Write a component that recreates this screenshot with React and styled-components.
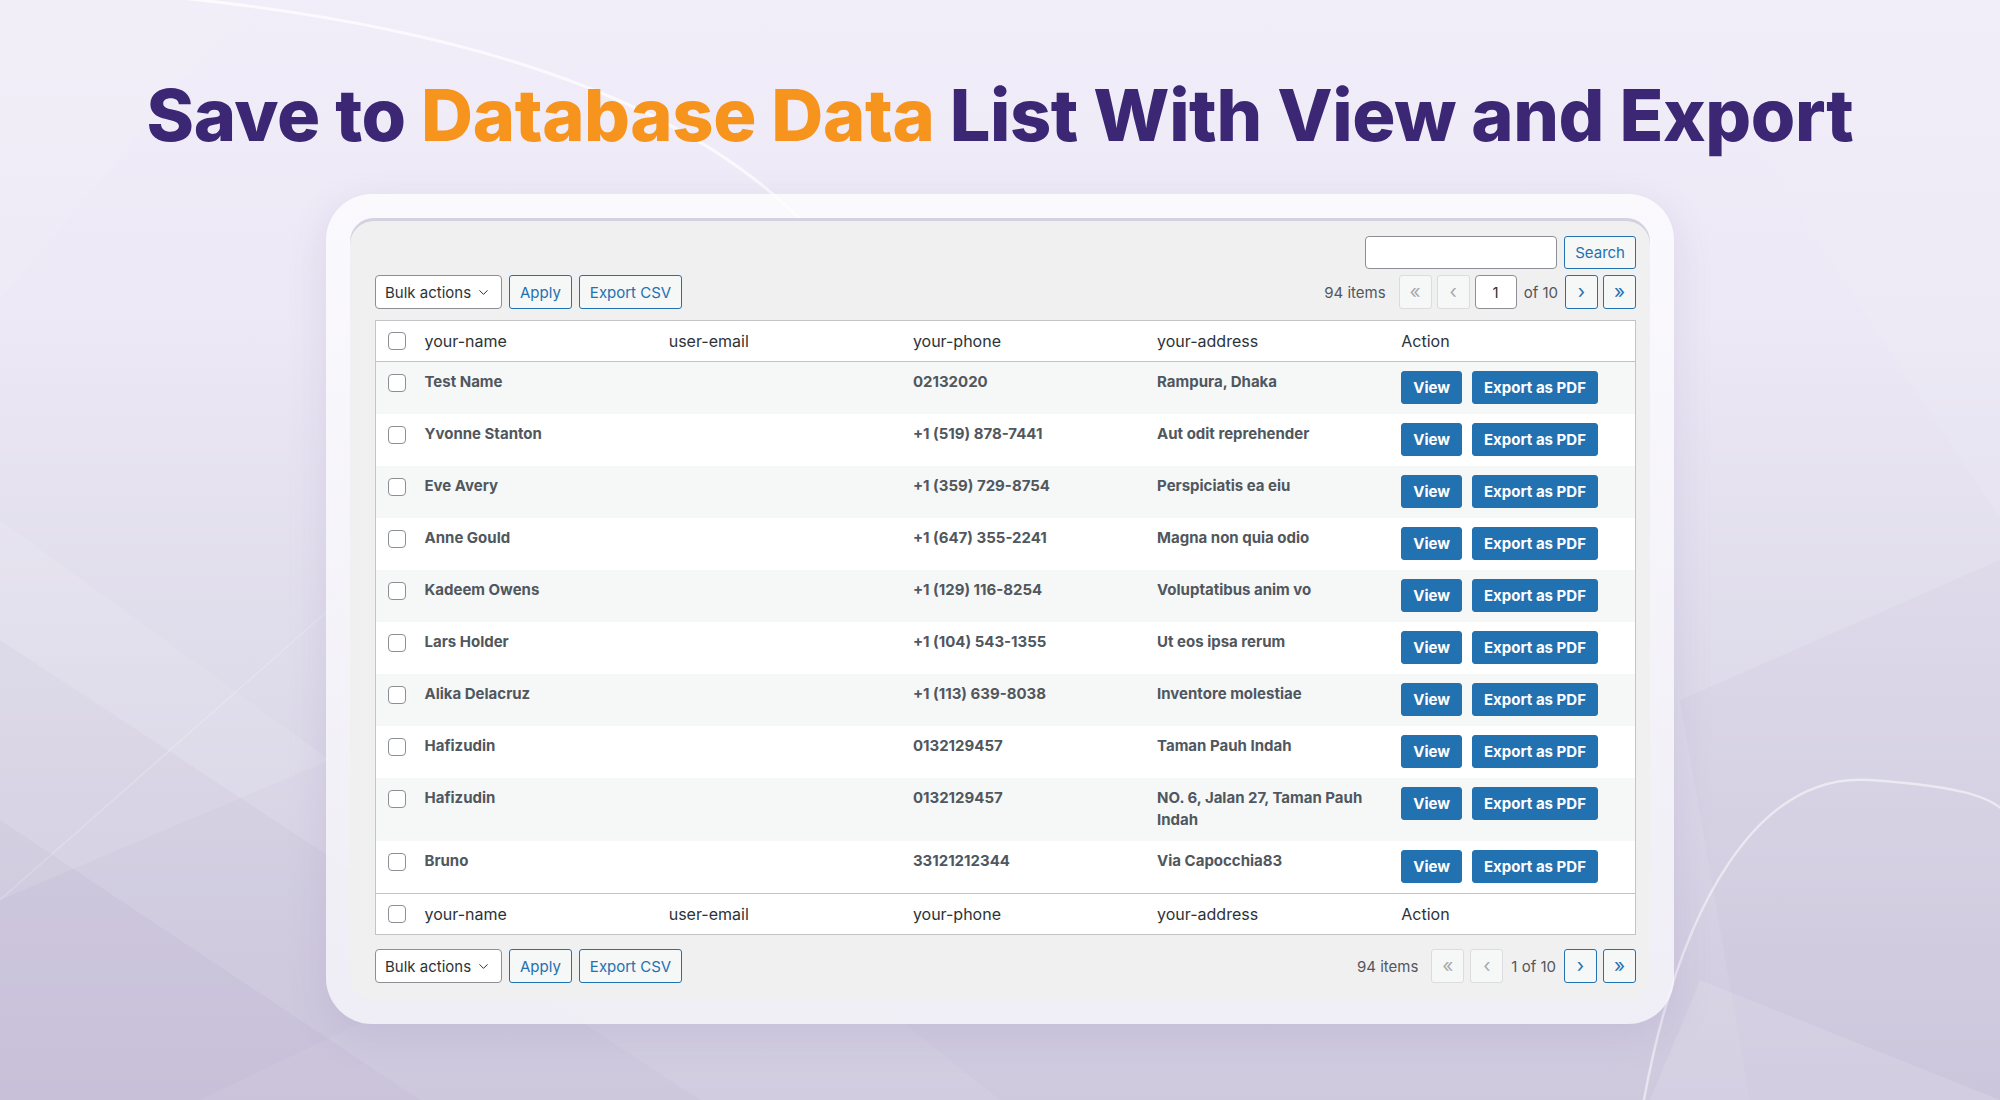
import React from 'react';
import styled, { createGlobalStyle } from 'styled-components';
import { ChevronDown } from 'lucide-react';

const GlobalStyle = createGlobalStyle`
  html, body {
    margin: 0;
    padding: 0;
  }
  body {
    font-family: Inter, "Liberation Sans", sans-serif;
    overflow: hidden;
  }
  * {
    box-sizing: border-box;
  }
`;

const Page = styled.div`
  position: relative;
  width: 2000px;
  height: 1100px;
  overflow: hidden;
  display: flex;
  flex-direction: column;
  align-items: center;
  background: linear-gradient(180deg, #f1edf9 0%, #ece8f5 30%, #dedbea 62%, #cfc9de 100%);
`;

const Backdrop = styled.svg`
  position: absolute;
  inset: 0;
  width: 100%;
  height: 100%;
  z-index: 0;
`;

const Title = styled.h1`
  position: relative;
  z-index: 1;
  margin: 79px 0 0;
  font-family: Inter, "Liberation Sans", sans-serif;
  font-size: 72px;
  line-height: 72px;
  font-weight: 800;
  letter-spacing: -0.4px;
  color: #3b2774;
  white-space: nowrap;
`;

const Accent = styled.span`
  color: #f7941d;
`;

const Frame = styled.div`
  position: relative;
  z-index: 1;
  margin-top: 43px;
  width: 1348px;
  padding: 24px;
  border-radius: 46px;
  background: linear-gradient(180deg, rgba(255, 255, 255, 0.72) 0%, rgba(247, 246, 251, 0.8) 100%);
  box-shadow: 0 12px 40px rgba(110, 95, 160, 0.14);
`;

const Panel = styled.div`
  background: #f0f0f1;
  border-radius: 24px;
  padding: 18px 14px 17px 25px;
  box-shadow: inset 0 3px 0 #d4d1e0;
`;

const SearchRow = styled.div`
  display: flex;
  justify-content: flex-end;
  gap: 7px;
`;

const SearchInput = styled.input`
  width: 192px;
  height: 33px;
  border: 1px solid #8c8f94;
  border-radius: 4px;
  background: #fff;
`;

const Toolbar = styled.div`
  display: flex;
  align-items: center;
  justify-content: space-between;
  margin-top: ${p => p.$top || 0}px;
`;

const Group = styled.div`
  display: flex;
  align-items: center;
  gap: ${p => p.$gap || 7}px;
`;

const OutlineButton = styled.button`
  height: ${p => p.$h || 34}px;
  padding: 0 10px;
  border: 1px solid #2271b1;
  border-radius: 3px;
  background: #f6f7f7;
  color: #2271b1;
  font-family: Inter, "Liberation Sans", sans-serif;
  font-size: 15px;
`;

const Select = styled.div`
  width: 127px;
  height: 34px;
  display: flex;
  align-items: center;
  justify-content: space-between;
  padding: 0 10px 0 9px;
  border: 1px solid #8c8f94;
  border-radius: 4px;
  background: #fff;
  color: #2c3338;
  font-size: 15px;
`;

const Count = styled.span`
  font-size: 15px;
  color: #50575e;
  margin-right: ${p => p.$gap || 6}px;
  white-space: nowrap;
`;

const PageButton = styled.span`
  width: 33px;
  height: 34px;
  display: flex;
  align-items: center;
  justify-content: center;
  border: 1px solid ${p => (p.$off ? '#dcdcde' : '#2271b1')};
  border-radius: 3px;
  background: #f6f7f7;
  color: ${p => (p.$off ? '#a7aaad' : '#2271b1')};
  font-size: 19px;
  line-height: 1;
  padding-bottom: 2px;
`;

const PageInput = styled.span`
  width: 42px;
  height: 34px;
  display: flex;
  align-items: center;
  justify-content: center;
  border: 1px solid #8c8f94;
  border-radius: 4px;
  background: #fff;
  color: #2c3338;
  font-size: 15px;
`;

const PageText = styled.span`
  font-size: 15px;
  color: #50575e;
  margin: 0 2px;
  white-space: nowrap;
`;

const Table = styled.table`
  width: 100%;
  margin: 11px 0 14px;
  border: 1px solid #c3c4c7;
  border-collapse: collapse;
  table-layout: fixed;
  background: #fff;
`;

const HeadCell = styled.th`
  padding: 8px 10px;
  line-height: 24px;
  text-align: left;
  font-weight: 400;
  font-size: 16px;
  color: #2c3338;
  border-bottom: ${p => (p.$foot ? 'none' : '1px solid #c3c4c7')};
  border-top: ${p => (p.$foot ? '1px solid #c3c4c7' : 'none')};
`;

const HeadCheck = styled(HeadCell)`
  padding: 0 0 0 12px;
  vertical-align: middle;
`;

const Row = styled.tr`
  background: ${p => (p.$striped ? '#f6f7f7' : '#fff')};
`;

const Cell = styled.td`
  padding: 9px 10px 10px;
  line-height: 22px;
  vertical-align: top;
  font-size: 15px;
  font-weight: 700;
  color: #50575e;
`;

const CheckCell = styled.td`
  padding: 12px 0 0 12px;
  vertical-align: top;
`;

const Box = styled.span`
  display: block;
  width: 18px;
  height: 18px;
  border: 1px solid #8c8f94;
  border-radius: 4px;
  background: #fff;
`;

const Actions = styled.div`
  display: flex;
  gap: 10px;
`;

const PrimaryButton = styled.button`
  height: 33px;
  padding: 0 11px;
  border: 1px solid #2271b1;
  border-radius: 3px;
  background: #2271b1;
  color: #fff;
  font-family: Inter, "Liberation Sans", sans-serif;
  font-size: 15px;
  font-weight: 700;
  white-space: nowrap;
`;

const rows = [
  ['Test Name', '02132020', 'Rampura, Dhaka'],
  ['Yvonne Stanton', '+1 (519) 878-7441', 'Aut odit reprehender'],
  ['Eve Avery', '+1 (359) 729-8754', 'Perspiciatis ea eiu'],
  ['Anne Gould', '+1 (647) 355-2241', 'Magna non quia odio'],
  ['Kadeem Owens', '+1 (129) 116-8254', 'Voluptatibus anim vo'],
  ['Lars Holder', '+1 (104) 543-1355', 'Ut eos ipsa rerum'],
  ['Alika Delacruz', '+1 (113) 639-8038', 'Inventore molestiae'],
  ['Hafizudin', '0132129457', 'Taman Pauh Indah'],
  ['Hafizudin', '0132129457', 'NO. 6, Jalan 27, Taman Pauh Indah'],
  ['Bruno', '33121212344', 'Via Capocchia83'],
];

const columns = ['your-name', 'user-email', 'your-phone', 'your-address', 'Action'];

function HeaderRow({ foot }) {
  return (
    <tr>
      <HeadCheck $foot={foot}><Box /></HeadCheck>
      {columns.map(c => (
        <HeadCell key={c} $foot={foot}>{c}</HeadCell>
      ))}
    </tr>
  );
}

function BulkBar() {
  return (
    <Group>
      <Select>
        Bulk actions
        <ChevronDown size={15} strokeWidth={1.6} color="#2c3338" />
      </Select>
      <OutlineButton>Apply</OutlineButton>
      <OutlineButton>Export CSV</OutlineButton>
    </Group>
  );
}

function Background() {
  return (
    <Backdrop viewBox="0 0 2000 1100" preserveAspectRatio="none">
      <polygon points="0,640 0,1100 700,1100" fill="#b8b0d0" opacity="0.14" />
      <polygon points="0,820 420,1100 0,1100" fill="#a9a0c4" opacity="0.12" />
      <polygon points="0,520 330,760 0,900" fill="#ffffff" opacity="0.1" />
      <polygon points="200,1100 700,860 1000,1100" fill="#ffffff" opacity="0.06" />
      <polygon points="1660,0 2000,0 2000,520" fill="#ffffff" opacity="0.08" />
      <polygon points="1680,700 2000,560 2000,1100 1750,1100" fill="#b7b0d2" opacity="0.1" />
      <polygon points="1700,980 2000,1100 1650,1100" fill="#ffffff" opacity="0.12" />
      <polygon points="0,300 250,0 0,0" fill="#ffffff" opacity="0.1" />
      <path d="M150 -5 Q 640 40 815 235" stroke="#ffffff" strokeWidth="3" fill="none" opacity="0.7" />
      <path d="M1643 1105 C 1680 900, 1760 772, 1870 780 S 1990 800 2010 815" stroke="#ffffff" strokeWidth="2.5" fill="none" opacity="0.5" />
      <path d="M0 900 L 340 600" stroke="#ffffff" strokeWidth="1.5" fill="none" opacity="0.2" />
    </Backdrop>
  );
}

export default function App() {
  return (
    <Page>
      <GlobalStyle />
      <Background />
      <Title>
        Save to <Accent>Database Data</Accent> List With View and Export
      </Title>
      <Frame>
        <Panel>
          <SearchRow>
            <SearchInput />
            <OutlineButton $h={33}>Search</OutlineButton>
          </SearchRow>
          <Toolbar $top={6}>
            <BulkBar />
            <Group $gap={5}>
              <Count $gap={8}>94 items</Count>
              <PageButton $off>«</PageButton>
              <PageButton $off>‹</PageButton>
              <PageInput>1</PageInput>
              <PageText>of 10</PageText>
              <PageButton>›</PageButton>
              <PageButton>»</PageButton>
            </Group>
          </Toolbar>
          <Table>
            <colgroup>
              <col style={{ width: 39 }} />
              <col />
              <col />
              <col />
              <col />
              <col />
            </colgroup>
            <thead>
              <HeaderRow />
            </thead>
            <tbody>
              {rows.map((r, i) => (
                <Row key={i} $striped={i % 2 === 0}>
                  <CheckCell><Box /></CheckCell>
                  <Cell>{r[0]}</Cell>
                  <Cell />
                  <Cell>{r[1]}</Cell>
                  <Cell>{r[2]}</Cell>
                  <Cell>
                    <Actions>
                      <PrimaryButton>View</PrimaryButton>
                      <PrimaryButton>Export as PDF</PrimaryButton>
                    </Actions>
                  </Cell>
                </Row>
              ))}
            </tbody>
            <tfoot>
              <HeaderRow foot />
            </tfoot>
          </Table>
          <Toolbar>
            <BulkBar />
            <Group $gap={6}>
              <Count $gap={7}>94 items</Count>
              <PageButton $off>«</PageButton>
              <PageButton $off>‹</PageButton>
              <PageText>1 of 10</PageText>
              <PageButton>›</PageButton>
              <PageButton>»</PageButton>
            </Group>
          </Toolbar>
        </Panel>
      </Frame>
    </Page>
  );
}
